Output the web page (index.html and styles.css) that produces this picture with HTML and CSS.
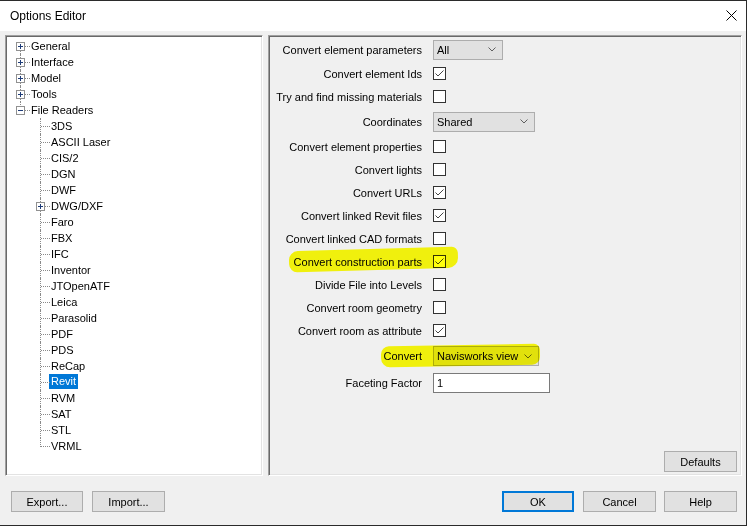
FILE: index.html
```html
<!DOCTYPE html>
<html>
<head>
<meta charset="utf-8">
<title>Options Editor</title>
<link rel="stylesheet" href="styles.css">
</head>
<body>
<div class="window">
  <div class="titlebar">
    <span class="title">Options Editor</span>
    <svg class="close" width="11" height="11" viewBox="0 0 11 11"><path d="M0.5 0.5 L10.5 10.5 M10.5 0.5 L0.5 10.5" stroke="#000" stroke-width="1" fill="none"/></svg>
  </div>
  <div class="main">
    <div class="tree sunken">
      <div class="node"><span class="cell down"><i class="box plus"></i></span><span class="label">General</span></div>
      <div class="node"><span class="cell tee"><i class="box plus"></i></span><span class="label">Interface</span></div>
      <div class="node"><span class="cell tee"><i class="box plus"></i></span><span class="label">Model</span></div>
      <div class="node"><span class="cell tee"><i class="box plus"></i></span><span class="label">Tools</span></div>
      <div class="node"><span class="cell up"><i class="box minus"></i></span><span class="label">File Readers</span></div>
      <div class="node"><span class="cell"></span><span class="cell tee"></span><span class="label">3DS</span></div>
      <div class="node"><span class="cell"></span><span class="cell tee"></span><span class="label">ASCII Laser</span></div>
      <div class="node"><span class="cell"></span><span class="cell tee"></span><span class="label">CIS/2</span></div>
      <div class="node"><span class="cell"></span><span class="cell tee"></span><span class="label">DGN</span></div>
      <div class="node"><span class="cell"></span><span class="cell tee"></span><span class="label">DWF</span></div>
      <div class="node"><span class="cell"></span><span class="cell tee"><i class="box plus"></i></span><span class="label">DWG/DXF</span></div>
      <div class="node"><span class="cell"></span><span class="cell tee"></span><span class="label">Faro</span></div>
      <div class="node"><span class="cell"></span><span class="cell tee"></span><span class="label">FBX</span></div>
      <div class="node"><span class="cell"></span><span class="cell tee"></span><span class="label">IFC</span></div>
      <div class="node"><span class="cell"></span><span class="cell tee"></span><span class="label">Inventor</span></div>
      <div class="node"><span class="cell"></span><span class="cell tee"></span><span class="label">JTOpenATF</span></div>
      <div class="node"><span class="cell"></span><span class="cell tee"></span><span class="label">Leica</span></div>
      <div class="node"><span class="cell"></span><span class="cell tee"></span><span class="label">Parasolid</span></div>
      <div class="node"><span class="cell"></span><span class="cell tee"></span><span class="label">PDF</span></div>
      <div class="node"><span class="cell"></span><span class="cell tee"></span><span class="label">PDS</span></div>
      <div class="node"><span class="cell"></span><span class="cell tee"></span><span class="label">ReCap</span></div>
      <div class="node"><span class="cell"></span><span class="cell tee"></span><span class="label selected">Revit</span></div>
      <div class="node"><span class="cell"></span><span class="cell tee"></span><span class="label">RVM</span></div>
      <div class="node"><span class="cell"></span><span class="cell tee"></span><span class="label">SAT</span></div>
      <div class="node"><span class="cell"></span><span class="cell tee"></span><span class="label">STL</span></div>
      <div class="node"><span class="cell"></span><span class="cell up"></span><span class="label">VRML</span></div>
    </div>

    <div class="options sunken">
      <div class="form">
        <div class="row h25"><span class="lbl">Convert element parameters</span>
          <span class="combo w70"><span>All</span><svg class="chev" width="8" height="5" viewBox="0 0 8 5"><path d="M0.5 0.5 L4 4 L7.5 0.5" stroke="#5f5f5f" fill="none"/></svg></span></div>
        <div class="row"><span class="lbl">Convert element Ids</span><span class="check"><svg width="11" height="11" viewBox="0 0 11 11"><path d="M1.5 5.5 L4 8 L9.5 2.5" stroke="#444" stroke-width="1" fill="none"/></svg></span></div>
        <div class="row"><span class="lbl">Try and find missing materials</span><span class="check"></span></div>
        <div class="row h27"><span class="lbl">Coordinates</span>
          <span class="combo w102"><span>Shared</span><svg class="chev" width="8" height="5" viewBox="0 0 8 5"><path d="M0.5 0.5 L4 4 L7.5 0.5" stroke="#5f5f5f" fill="none"/></svg></span></div>
        <div class="row"><span class="lbl">Convert element properties</span><span class="check"></span></div>
        <div class="row"><span class="lbl">Convert lights</span><span class="check"></span></div>
        <div class="row"><span class="lbl">Convert URLs</span><span class="check"><svg width="11" height="11" viewBox="0 0 11 11"><path d="M1.5 5.5 L4 8 L9.5 2.5" stroke="#444" stroke-width="1" fill="none"/></svg></span></div>
        <div class="row"><span class="lbl">Convert linked Revit files</span><span class="check"><svg width="11" height="11" viewBox="0 0 11 11"><path d="M1.5 5.5 L4 8 L9.5 2.5" stroke="#444" stroke-width="1" fill="none"/></svg></span></div>
        <div class="row"><span class="lbl">Convert linked CAD formats</span><span class="check"></span></div>
        <div class="row"><span class="lbl">Convert construction parts</span><span class="check"><svg width="11" height="11" viewBox="0 0 11 11"><path d="M1.5 5.5 L4 8 L9.5 2.5" stroke="#444" stroke-width="1" fill="none"/></svg></span></div>
        <div class="row"><span class="lbl">Divide File into Levels</span><span class="check"></span></div>
        <div class="row"><span class="lbl">Convert room geometry</span><span class="check"></span></div>
        <div class="row"><span class="lbl">Convert room as attribute</span><span class="check"><svg width="11" height="11" viewBox="0 0 11 11"><path d="M1.5 5.5 L4 8 L9.5 2.5" stroke="#444" stroke-width="1" fill="none"/></svg></span></div>
        <div class="row h28"><span class="lbl">Convert</span>
          <span class="combo w106"><span>Navisworks view</span><svg class="chev" width="8" height="5" viewBox="0 0 8 5"><path d="M0.5 0.5 L4 4 L7.5 0.5" stroke="#5f5f5f" fill="none"/></svg></span></div>
        <div class="row h25"><span class="lbl">Faceting Factor</span><span class="input">1</span></div>
      </div>
      <div class="hl hl-parts"></div>
      <div class="hl hl-convert"></div>
      <button class="btn defaults">Defaults</button>
    </div>
  </div>
  <div class="footer">
    <div class="group">
      <button class="btn">Export...</button>
      <button class="btn">Import...</button>
    </div>
    <div class="group">
      <button class="btn ok">OK</button>
      <button class="btn">Cancel</button>
      <button class="btn help">Help</button>
    </div>
  </div>
</div>
</body>
</html>
```

FILE: styles.css
```css
* { box-sizing: border-box; }
html, body { margin: 0; padding: 0; }
body {
  width: 747px;
  height: 526px;
  overflow: hidden;
  font-family: "Liberation Sans", Arial, sans-serif;
  font-size: 11px;
  color: #000;
  background: #f0f0f0;
}
.window {
  width: 747px;
  height: 526px;
  background: #f0f0f0;
  border-top: 1px solid #2b2b2b;
  border-right: 1px solid #2b2b2b;
  border-bottom: 1px solid #2b2b2b;
  display: flex;
  flex-direction: column;
}
.titlebar {
  height: 30px;
  background: #fff;
  display: flex;
  align-items: center;
  justify-content: space-between;
  padding: 0 9px 0 10px;
  flex: none;
}
.title { font-size: 12px; }
.close { display: block; margin-top: -1px; }

.main {
  display: flex;
  gap: 5px;
  padding: 4px 4px 0 5px;
  height: 445px;
  flex: none;
}
.sunken {
  border: 1px solid;
  border-color: #a0a0a0 #ffffff #ffffff #a0a0a0;
  box-shadow: inset 1px 1px 0 #696969, inset -1px -1px 0 #e3e3e3;
  padding: 1px;
}
.tree {
  width: 258px;
  height: 441px;
  background: #fff;
  padding: 2px 1px 1px 5px;
}
.node {
  display: flex;
  height: 16px;
  line-height: 16px;
}
.cell {
  width: 20px;
  height: 16px;
  position: relative;
  flex: none;
}
.cell.tee::before, .cell.up::before, .cell.down::before {
  content: "";
  position: absolute;
  left: 9px;
  border-left: 1px dotted #8a8a8a;
}
.cell.tee::before { top: 0; bottom: 0; }
.cell.up::before { top: 0; height: 9px; }
.cell.down::before { top: 8px; bottom: 0; }
.cell.tee::after, .cell.up::after, .cell.down::after {
  content: "";
  position: absolute;
  left: 10px;
  top: 8px;
  width: 9px;
  border-top: 1px dotted #8a8a8a;
}
.box {
  position: absolute;
  left: 5px;
  top: 4px;
  width: 9px;
  height: 9px;
  border: 1px solid #919191;
  background: #fff;
  z-index: 1;
}
.box::before {
  content: "";
  position: absolute;
  left: 1px;
  top: 3px;
  width: 5px;
  height: 1px;
  background: #1e3c78;
}
.box.plus::after {
  content: "";
  position: absolute;
  left: 3px;
  top: 1px;
  width: 1px;
  height: 5px;
  background: #1e3c78;
}
.label {
  white-space: nowrap;
}
.selected {
  background: #0078d7;
  color: #fff;
  margin-left: -2px;
  padding: 0 2px;
  height: 15px;
  line-height: 15px;
}

.options {
  position: relative;
  width: 474px;
  height: 441px;
  display: flex;
  flex-direction: column;
  padding: 1px 4px 3px 1px;
}
.form {
  display: flex;
  flex-direction: column;
}
.row {
  display: flex;
  align-items: center;
  height: 23px;
  gap: 11px;
}
.row.h25 { height: 25px; }
.row.h27 { height: 27px; }
.row.h28 { height: 28px; }
.lbl {
  width: 152px;
  text-align: right;
  white-space: nowrap;
}
.check {
  width: 13px;
  height: 13px;
  border: 1px solid #333;
  background: #fff;
  display: flex;
  align-items: center;
  justify-content: center;
}
.check svg { display: block; }
.combo {
  height: 20px;
  background: #e1e1e1;
  border: 1px solid #adadad;
  display: flex;
  align-items: center;
  justify-content: space-between;
  padding: 0 6px 0 3px;
}
.w70 { width: 70px; }
.w102 { width: 102px; }
.w106 { width: 106px; }
.chev { display: block; }
.input {
  width: 117px;
  height: 20px;
  background: #fff;
  border: 1px solid #7a7a7a;
  padding-left: 3px;
  line-height: 18px;
}
.hl {
  position: absolute;
  background: #ffff00;
  mix-blend-mode: multiply;
  opacity: 0.95;
}
.hl-parts {
  left: 20px;
  top: 213px;
  width: 169px;
  height: 21px;
  border-radius: 9px 6px 10px 8px;
  transform: rotate(-1.6deg);
}
.hl-convert {
  left: 112px;
  top: 309px;
  width: 159px;
  height: 21px;
  border-radius: 8px 6px 8px 9px;
  transform: rotate(-1deg);
}
.btn {
  font-family: "Liberation Sans", Arial, sans-serif;
  font-size: 11px;
  color: #000;
  background: #e1e1e1;
  border: 1px solid #adadad;
  height: 21px;
  width: 73px;
  padding: 0;
  margin: 0;
}
.defaults {
  margin-top: auto;
  align-self: flex-end;
}
.footer {
  display: flex;
  justify-content: space-between;
  padding: 15px 9px 0 11px;
}
.group {
  display: flex;
  gap: 9px;
}
.group .btn:first-child { width: 72px; }
.ok { border: 2px solid #0078d7; }
.help { margin-left: -1px; }
```
